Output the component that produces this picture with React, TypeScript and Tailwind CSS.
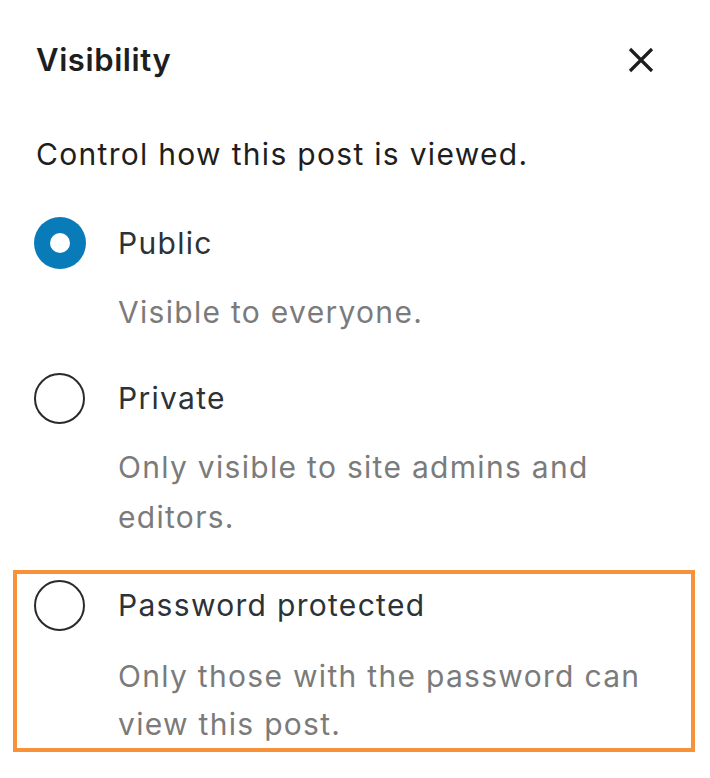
import React from "react";

function Radio({ checked }: { checked?: boolean }) {
  if (checked) {
    return (
      <span className="flex h-[52px] w-[52px] shrink-0 items-center justify-center rounded-full bg-[#0a7bb9]">
        <span className="h-[20px] w-[20px] rounded-full bg-white" />
      </span>
    );
  }
  return <span className="block h-[51px] w-[51px] shrink-0 rounded-full border-2 border-[#2a2a2a]" />;
}

export default function App() {
  return (
    <div
      className="min-h-[778px] w-[710px] bg-white pt-[35px] text-[#1e1e1e]"
      style={{ fontFamily: "Inter, 'Noto Sans', sans-serif" }}
    >
      <div className="flex h-[50px] items-center justify-between pl-[36px] pr-[56px]">
        <h2 className="text-[31px] font-semibold tracking-[0.6px]">Visibility</h2>
        <button aria-label="Close" className="flex h-[26px] w-[26px] items-center justify-center">
          <svg width="26" height="26" viewBox="0 0 26 26">
            <path d="M2 2 L24 24 M24 2 L2 24" stroke="#1e1e1e" strokeWidth="3.2" strokeLinecap="butt" />
          </svg>
        </button>
      </div>

      <p className="mt-[44px] pl-[36px] text-[30px] leading-[50px] tracking-[1.3px]">Control how this post is viewed.</p>

      <div className="mt-[38px] pl-[34px]">
        <div className="flex h-[52px] items-center gap-[32px]">
          <Radio checked />
          <span className="text-[30px] tracking-[1.3px] text-[#2c3338]">Public</span>
        </div>
        <p className="mt-[18px] pl-[84px] text-[30px] leading-[50px] tracking-[1.3px] text-[#7b7b7b]">Visible to everyone.</p>
      </div>

      <div className="mt-[35px] pl-[34px]">
        <div className="flex h-[52px] items-center gap-[33px]">
          <Radio />
          <span className="text-[30px] tracking-[1.3px] text-[#2c3338]">Private</span>
        </div>
        <p className="mt-[18px] w-[580px] pl-[84px] text-[30px] leading-[50px] tracking-[1.3px] text-[#7b7b7b]">
          Only visible to site admins and editors.
        </p>
      </div>

      <div className="ml-[13px] mr-[15px] mt-[28px] border-4 border-[#f8923a] pl-[17px]">
        <div className="mt-[5px] flex h-[52px] items-center gap-[33px]">
          <Radio />
          <span className="text-[30px] tracking-[1.3px] text-[#2c3338]">Password protected</span>
        </div>
        <p className="mt-[21px] pl-[84px] pr-[20px] text-[30px] leading-[48px] tracking-[1.3px] text-[#7b7b7b]">
          Only those with the password can view this post.
        </p>
      </div>
    </div>
  );
}
